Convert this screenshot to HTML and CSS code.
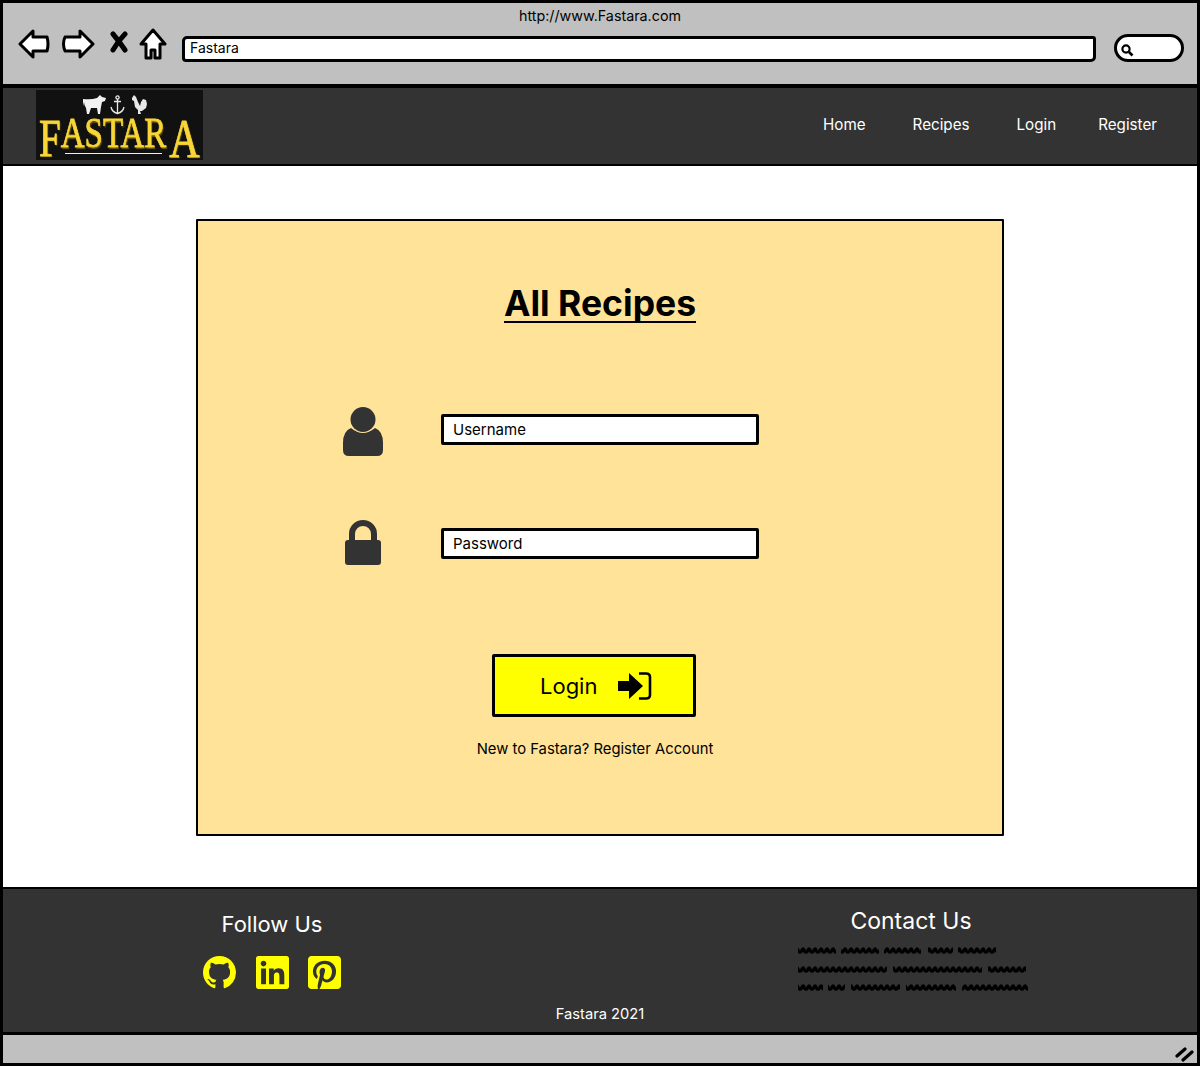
FILE: index.html
```html
<!DOCTYPE html>
<html lang="en">
<head>
    <meta charset="UTF-8">
    <meta name="viewport" content="width=device-width, initial-scale=1.0">
    <title>Fastara - Login</title>
    <link rel="stylesheet" href="styles.css">
</head>
<body>
    <svg class="defs" width="0" height="0">
        <defs>
            <pattern id="squiggle" width="6" height="8" patternUnits="userSpaceOnUse">
                <path d="M-3 6 Q-1 1 0 4 T3 6 Q5 1 6 4 T9 6" fill="none" stroke="#000" stroke-width="3"/>
            </pattern>
        </defs>
    </svg>
    <div class="window">
        <header class="chrome">
            <div class="address">http://www.Fastara.com</div>
            <div class="chrome-row">
                <svg class="ctl-back" width="32" height="30" viewBox="0 0 32 30"><path d="M2 15 L15 2 L15 8 L29 8 Q31 15 29 22 L15 22 L15 28 Z" fill="#fff" stroke="#000" stroke-width="3" stroke-linejoin="round"/></svg>
                <svg class="ctl-forward" width="34" height="30" viewBox="0 0 34 30"><path d="M32 15 L19 2 L19 8 L4 8 Q1 15 4 22 L19 22 L19 28 Z" fill="#fff" stroke="#000" stroke-width="3" stroke-linejoin="round"/></svg>
                <svg class="ctl-stop" width="20" height="22" viewBox="0 0 20 22"><path d="M4 3 Q10 10 16 19 M16 3 Q9 10 4 19" fill="none" stroke="#000" stroke-width="5" stroke-linecap="round"/></svg>
                <svg class="ctl-home" width="28" height="32" viewBox="0 0 28 32"><path d="M14 2 L26 16 L21 16 L21 30 L16 30 L16 22 L12 22 L12 30 L7 30 L7 16 L2 16 Z" fill="#fff" stroke="#000" stroke-width="3" stroke-linejoin="round"/></svg>
                <div class="url-field">Fastara</div>
                <div class="search-field">
                    <svg width="14" height="14" viewBox="0 0 14 14"><circle cx="6" cy="6" r="3.6" fill="none" stroke="#000" stroke-width="2.2"/><path d="M9 9 L12.5 12.5" stroke="#000" stroke-width="2.6"/></svg>
                </div>
            </div>
        </header>

        <nav class="navbar">
            <div class="logo">
                <div class="logo-icons">
                    <svg class="logo-cow" width="23" height="20" viewBox="0 0 23 20"><path d="M0 4 Q8 5 14 3 L17 0 L19 2 L23 3 L22 6 L19 7 L18 12 L17 19 L15 19 L14 13 L8 13 L6 19 L4 19 L3 13 Q1 10 1 7 L0 11 Z" fill="#f2f2f2"/></svg>
                    <svg class="logo-anchor" width="15" height="20" viewBox="0 0 15 20"><g fill="none" stroke="#e8e8e8" stroke-width="1.300"><circle cx="7.500" cy="2.500" r="1.600"/><path d="M7.500 4 V18 M4 6.500 H11 M1 12 Q2 17 7.500 18.500 Q13 17 14 12"/></g></svg>
                    <svg class="logo-rooster" width="16" height="20" viewBox="0 0 16 20"><path d="M1 3 L3 0 L5 2 L7 7 L9 11 L10 7 L12 4 L15 5 L16 9 L15 13 L11 16 L9 16 L10 19 L7 19 L7 15 L4 12 L3 6 L1 5 Z" fill="#e8e8e8"/></svg>
                </div>
                <div class="wordmark">
                    <span class="mark-f">F</span><span class="mark-mid">ASTAR</span><span class="mark-a">A</span>
                </div>
                <div class="wordmark-rule"></div>
            </div>
            <ul class="nav-links">
                <li class="nav-home">Home</li>
                <li class="nav-recipes">Recipes</li>
                <li class="nav-login">Login</li>
                <li>Register</li>
            </ul>
        </nav>

        <main class="content">
            <section class="card">
                <h1>All Recipes</h1>
                <div class="field-row">
                    <svg class="field-icon user-icon" width="42" height="50" viewBox="0 0 42 50"><circle cx="21" cy="12.500" r="12.500" fill="#333"/><path d="M9 21 Q21 31 33 21 Q41 24 41 36 V43 Q41 49 35 49 H7 Q1 49 1 43 V36 Q1 24 9 21 Z" fill="#333"/></svg>
                    <div class="text-input">Username</div>
                </div>
                <div class="field-row">
                    <svg class="field-icon" width="42" height="46" viewBox="0 0 42 46"><path d="M10 21 V14 A11 11 0 0 1 32 14 V21" fill="none" stroke="#333" stroke-width="6"/><rect x="3" y="20" width="36" height="25" rx="3" fill="#333"/></svg>
                    <div class="text-input">Password</div>
                </div>
                <button class="login-btn" type="button">
                    Login
                    <svg width="34" height="28" viewBox="0 0 34 28"><path d="M0 9 H11 V1 L25 14 L11 27 V19 H0 Z" fill="#000"/><path d="M21 1.500 H28 Q32 1.500 32 5 V23 Q32 26.500 28 26.500 H21" fill="none" stroke="#000" stroke-width="2.600"/></svg>
                </button>
                <p class="register-note">New to Fastara? Register Account</p>
            </section>
        </main>

        <footer class="site-footer">
            <div class="footer-cols">
                <div class="follow">
                    <h2>Follow Us</h2>
                    <div class="social">
                        <svg width="33" height="33" viewBox="0 0 16 16"><path fill="#ff0" d="M8 0C3.58 0 0 3.58 0 8c0 3.54 2.29 6.53 5.47 7.59.4.07.55-.17.55-.38 0-.19-.01-.82-.01-1.49-2.01.37-2.53-.49-2.69-.94-.09-.23-.48-.94-.82-1.13-.28-.15-.68-.52-.01-.53.63-.01 1.08.58 1.23.82.72 1.21 1.87.87 2.33.66.07-.52.28-.87.51-1.07-1.78-.2-3.64-.89-3.64-3.95 0-.87.31-1.59.82-2.15-.08-.2-.36-1.02.08-2.12 0 0 .67-.21 2.2.82.64-.18 1.32-.27 2-.27.68 0 1.36.09 2 .27 1.53-1.04 2.2-.82 2.2-.82.44 1.1.16 1.92.08 2.12.51.56.82 1.27.82 2.15 0 3.07-1.87 3.75-3.65 3.95.29.25.54.73.54 1.48 0 1.07-.01 1.93-.01 2.2 0 .21.15.46.55.38A8.013 8.013 0 0016 8c0-4.42-3.58-8-8-8z"/></svg>
                        <svg width="33" height="33" viewBox="0 32 448 448"><path fill="#ff0" d="M416 32H31.9C14.3 32 0 46.5 0 64.3v383.4C0 465.5 14.3 480 31.9 480H416c17.6 0 32-14.5 32-32.3V64.3c0-17.8-14.4-32.3-32-32.3zM135.4 416H69V202.2h66.5V416zm-33.2-243c-21.3 0-38.5-17.3-38.5-38.5S80.9 96 102.2 96c21.2 0 38.5 17.3 38.5 38.5 0 21.3-17.2 38.5-38.5 38.5zm282.1 243h-66.4V312c0-24.8-.5-56.7-34.5-56.7-34.6 0-39.9 27-39.9 54.9V416h-66.4V202.2h63.7v29.2h.9c8.9-16.8 30.6-34.5 62.9-34.5 67.2 0 79.7 44.3 79.7 101.9V416z"/></svg>
                        <svg width="33" height="33" viewBox="0 32 448 448"><path fill="#ff0" d="M448 80v352c0 26.500-21.500 48-48 48H154.400c9.800-16.400 22.400-40 27.400-59.300 3-11.500 15.300-58.400 15.300-58.400 8 15.300 31.400 28.200 56.300 28.200 74.100 0 127.400-68.100 127.400-152.700 0-81.100-66.200-141.800-151.400-141.800-106 0-162.200 71.100-162.200 148.600 0 36 19.200 80.800 49.800 95.100 4.700 2.200 7.100 1.200 8.200-3.300.8-3.400 5-20.100 6.800-27.800.6-2.500.3-4.600-1.700-7-10.100-12.300-18.300-34.900-18.300-56 0-54.200 41-106.600 110.900-106.600 60.300 0 102.600 41.100 102.600 99.900 0 66.400-33.500 112.400-77.200 112.400-24.100 0-42.100-19.900-36.400-44.400 6.900-29.200 20.300-60.700 20.300-81.800 0-53-75.500-45.700-75.500 25 0 21.700 7.300 36.500 7.300 36.500-31.400 132.800-36.100 134.500-29.600 192.600l2.200.8H48c-26.500 0-48-21.500-48-48V80c0-26.500 21.500-48 48-48h352c26.500 0 48 21.500 48 48z"/></svg>
                    </div>
                </div>
                <div class="contact">
                    <h2>Contact Us</h2>
                    <div class="scribble">
                        <svg width="232" height="8"><rect x="0" width="38" height="8" fill="url(#squiggle)"/><rect x="43" width="38" height="8" fill="url(#squiggle)"/><rect x="86" width="37" height="8" fill="url(#squiggle)"/><rect x="130" width="25" height="8" fill="url(#squiggle)"/><rect x="160" width="38" height="8" fill="url(#squiggle)"/></svg>
                        <svg width="232" height="8"><rect x="0" width="89" height="8" fill="url(#squiggle)"/><rect x="95" width="89" height="8" fill="url(#squiggle)"/><rect x="190" width="38" height="8" fill="url(#squiggle)"/></svg>
                        <svg width="232" height="8"><rect x="0" width="25" height="8" fill="url(#squiggle)"/><rect x="30" width="17" height="8" fill="url(#squiggle)"/><rect x="53" width="49" height="8" fill="url(#squiggle)"/><rect x="108" width="50" height="8" fill="url(#squiggle)"/><rect x="164" width="66" height="8" fill="url(#squiggle)"/></svg>
                    </div>
                </div>
            </div>
            <p class="copyright">Fastara 2021</p>
        </footer>

        <div class="status-bar">
            <svg width="20" height="16" viewBox="0 0 20 16"><path d="M2 10 L10 3 M8 14 L17 6" stroke="#000" stroke-width="3.200" stroke-linecap="round"/></svg>
        </div>
    </div>
</body>
</html>
```
FILE: styles.css
```css
* {
    box-sizing: border-box;
}

body {
    margin: 0;
    font-family: Inter, Lato, sans-serif;
    color: #000;
    background-color: #fff;
}

.defs {
    position: absolute;
}

.window {
    width: 1200px;
    height: 1067px;
    padding-bottom: 1px;
    display: flex;
    flex-direction: column;
}

.chrome {
    height: 86px;
    padding: 4px 0 0 20px;
    background-color: #c0c0c0;
    border: 3px solid #000;
    border-bottom-width: 2px;
}

.address {
    margin-left: -20px;
    text-align: center;
    font-size: 14.300px;
    line-height: 18px;
}

.chrome-row {
    display: flex;
    align-items: center;
    height: 36px;
    margin-top: 3px;
    margin-left: -5px;
}

.ctl-back,
.ctl-forward,
.ctl-home {
    margin-top: -4px;
}

.ctl-forward {
    margin-left: 11px;
}

.ctl-stop {
    margin-left: 14px;
    margin-top: -8px;
}

.ctl-home {
    margin-left: 10px;
}

.url-field {
    width: 914px;
    height: 26px;
    margin-left: 15px;
    margin-top: 5px;
    padding: 0 5px;
    background-color: #fff;
    border: 3px solid #000;
    border-radius: 5px 3px 5px 4px;
    font-size: 14px;
    line-height: 18px;
}

.search-field {
    width: 70px;
    height: 28px;
    margin-left: 18px;
    margin-top: 4px;
    padding: 4px 0 0 3px;
    background-color: #fff;
    border: 3px solid #000;
    border-radius: 14px;
}

.navbar {
    height: 80px;
    padding: 2px 40px 0 33px;
    display: flex;
    justify-content: space-between;
    background-color: #333;
    border: 3px solid #000;
    border-top-width: 2px;
    border-bottom-width: 2px;
}

.logo {
    position: relative;
    width: 167px;
    height: 70px;
    background-color: #111;
}

.logo-icons {
    display: flex;
    height: 24px;
    padding: 5px 0 0 47px;
}

.logo-anchor {
    margin-left: 4px;
}

.logo-rooster {
    margin-left: 6px;
}

.wordmark {
    display: flex;
    align-items: flex-start;
    padding-left: 3px;
    font-family: "Liberation Serif", serif;
    color: #f9d637;
    white-space: nowrap;
    line-height: 1;
    -webkit-text-stroke: 0.6px #f9d637;
    text-shadow: 1px 1px 1px #6b5a10;
}

.wordmark span {
    display: block;
    transform-origin: top left;
}

.mark-f {
    margin-top: -3px;
    font-size: 39px;
    transform: scaleY(1.35);
}

.mark-mid {
    margin-top: -1px;
    font-size: 33px;
    transform: scaleY(1.27);
}

.mark-a {
    margin-top: -3px;
    margin-left: 3px;
    font-size: 42px;
    transform: scaleY(1.3);
}

.wordmark-rule {
    position: absolute;
    left: 29px;
    top: 63px;
    width: 97px;
    height: 1px;
    background-color: #eee;
}

.nav-links {
    list-style: none;
    margin: 0;
    padding: 0;
    display: flex;
    align-items: center;
    height: 68px;
    font-size: 15.200px;
    color: #fff;
}

.nav-home {
    margin-right: 47px;
}

.nav-recipes {
    margin-right: 47px;
}

.nav-login {
    margin-right: 42px;
}

.content {
    flex: 1;
    padding-top: 53px;
    border-left: 3px solid #000;
    border-right: 3px solid #000;
}

.card {
    width: 808px;
    height: 617px;
    margin: 0 auto;
    padding-top: 65px;
    background-color: #ffe398;
    border: 2px solid #000;
    border-radius: 1px;
}

h1 {
    width: fit-content;
    margin: 0 auto 81px;
    font-size: 35.500px;
    line-height: 35px;
    font-weight: 700;
    border-bottom: 2px solid #000;
}

.field-row {
    display: flex;
    align-items: center;
    height: 50px;
    margin-bottom: 64px;
    padding-left: 144px;
}

.field-icon {
    flex: none;
    margin-right: 57px;
}

.user-icon {
    margin-top: 6px;
}

.text-input {
    width: 318px;
    height: 31px;
    padding-left: 9px;
    background-color: #fff;
    border: 3px solid #000;
    border-radius: 2px;
    font-size: 15px;
    line-height: 25px;
}

.login-btn {
    display: flex;
    align-items: center;
    gap: 21px;
    width: 204px;
    height: 63px;
    margin: 86px 0 0 294px;
    padding: 0 0 0 45px;
    background-color: #ff0;
    border: 3px solid #000;
    border-radius: 2px;
    font-family: inherit;
    font-size: 22px;
    color: #000;
}

.register-note {
    margin: 22px 0 0;
    padding-right: 10px;
    text-align: center;
    font-size: 14.800px;
    line-height: 20px;
}

.site-footer {
    height: 147px;
    background-color: #333;
    color: #fff;
    border: 3px solid #000;
    border-top-width: 2px;
    border-bottom-width: 2px;
}

.footer-cols {
    display: flex;
    height: 116px;
}

.follow {
    width: 538px;
    padding-top: 21px;
    text-align: center;
}

.follow h2,
.contact h2 {
    margin: 0;
    font-size: 22px;
    line-height: 28px;
    font-weight: 400;
}

.social {
    display: flex;
    justify-content: center;
    gap: 19.500px;
    margin-top: 18px;
}

.contact {
    width: 232px;
    margin-left: 257px;
    padding-top: 18px;
}

.contact h2 {
    padding-right: 6px;
    text-align: center;
    font-size: 23px;
}

.scribble {
    display: flex;
    flex-direction: column;
    gap: 10.500px;
    margin-top: 11px;
    filter: blur(0.4px);
}

.scribble svg {
    display: block;
}

.copyright {
    margin: 0;
    text-align: center;
    font-size: 14.700px;
    line-height: 18px;
}

.status-bar {
    height: 32px;
    display: flex;
    justify-content: flex-end;
    align-items: flex-end;
    padding: 0 2px 1px 0;
    background-color: #c0c0c0;
    border: 3px solid #000;
    border-top-width: 1px;
}
```
